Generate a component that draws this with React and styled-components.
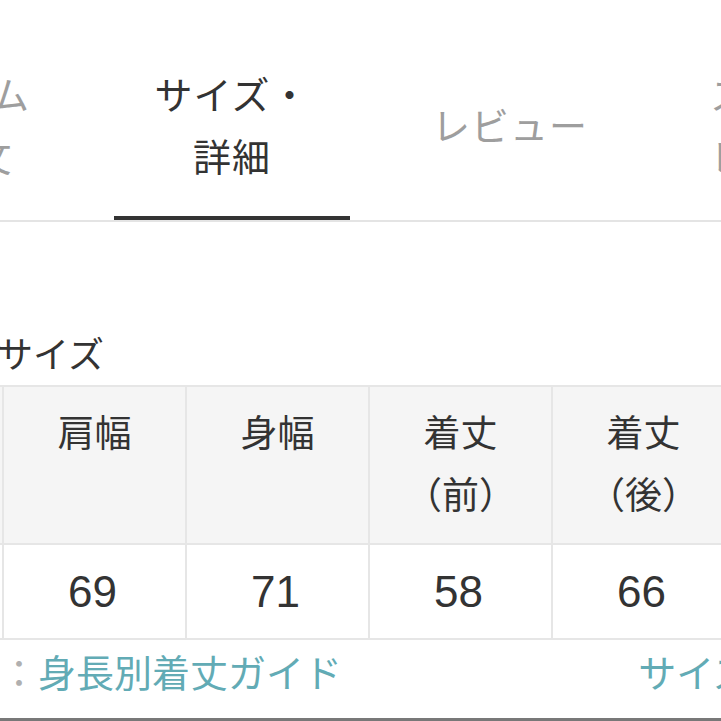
import React from 'react'
import styled, { createGlobalStyle } from 'styled-components'

const GlobalStyle = createGlobalStyle`
    html, body {
        margin: 0;
        padding: 0;
        background: #fff;
    }
    body {
        font-family: "Noto Sans CJK JP", "Noto Sans", sans-serif;
        color: #333;
    }
`

const Page = styled.div`
    width: 721px;
    height: 721px;
    overflow: hidden;
    box-sizing: border-box;
    border-bottom: 3px solid #787878;
    background: #fff;
    display: flex;
    flex-direction: column;
`

const TabBar = styled.nav`
    display: flex;
    flex-shrink: 0;
    margin-left: -185px;
    padding-top: 27px;
    border-bottom: 2px solid #e4e4e4;
    width: max-content;
    min-width: 906px;
`

const Tab = styled.div`
    position: relative;
    width: 278px;
    height: 193px;
    flex-shrink: 0;
    display: flex;
    align-items: center;
    justify-content: center;
    text-align: center;
    font-size: 38px;
    line-height: 62px;
    letter-spacing: 1px;
    color: ${p => (p.$active ? '#333' : '#9e9e9e')};
    white-space: pre-line;

    &::after {
        content: '';
        display: ${p => (p.$active ? 'block' : 'none')};
        position: absolute;
        left: 21px;
        right: 21px;
        bottom: 0;
        height: 4px;
        background: #333;
    }
`

const Section = styled.section`
    padding-top: 105px;
`

const Title = styled.h2`
    margin: 0 0 0 -3px;
    font-size: 36px;
    font-weight: 400;
    line-height: 50px;
    height: 58px;
    color: #333;
`

const Table = styled.table`
    margin-left: -181px;
    border-collapse: collapse;
    table-layout: fixed;
    width: ${183 * 6}px;
`

const HeadCell = styled.th`
    width: 183px;
    height: 158px;
    box-sizing: border-box;
    padding: 13px 0 0;
    vertical-align: top;
    background: #f5f5f5;
    border: 2px solid #e6e6e6;
    font-size: 37px;
    font-weight: 400;
    line-height: 62px;
    color: #333;
    white-space: pre-line;
`

const BodyCell = styled.td`
    height: 93px;
    padding: 0 4px 0 0;
    text-align: center;
    vertical-align: middle;
    background: #fff;
    border: 2px solid #e6e6e6;
    font-family: "Liberation Sans", Arial, sans-serif;
    font-size: 44px;
    color: #333;
`

const LinkRow = styled.div`
    display: flex;
    align-items: center;
    padding-top: 4px;
    height: 54px;
`

const GuideLink = styled.a`
    flex-shrink: 0;
    font-size: 38px;
    line-height: 50px;
    color: #62abb5;
    text-decoration: none;
    white-space: nowrap;
    margin-left: ${p => (p.$right ? 'auto' : '0')};
    margin-right: ${p => (p.$right ? '-182px' : '0')};
`

const Colon = styled.span`
    color: #b0b0b0;
`

const tabs = [
    { label: 'アイテム\n紹介文' },
    { label: 'サイズ・\n詳細', active: true },
    { label: 'レビュー' },
    { label: 'スタッフ\nレビュー' },
]

const heads = ['サイズ', '肩幅', '身幅', '着丈\n（前）', '着丈\n（後）', '袖丈']
const values = ['FREE', '69', '71', '58', '66', '52']

export default function App() {
    return (
        <Page>
            <GlobalStyle />
            <TabBar>
                {tabs.map(t => (
                    <Tab key={t.label} $active={t.active}>{t.label}</Tab>
                ))}
            </TabBar>
            <Section>
                <Title>サイズ</Title>
                <Table>
                    <thead>
                        <tr>
                            {heads.map(h => <HeadCell key={h}>{h}</HeadCell>)}
                        </tr>
                    </thead>
                    <tbody>
                        <tr>
                            {values.map((v, i) => <BodyCell key={i}>{v}</BodyCell>)}
                        </tr>
                    </tbody>
                </Table>
                <LinkRow>
                    <GuideLink href="#"><Colon>：</Colon>身長別着丈ガイド</GuideLink>
                    <GuideLink href="#" $right>サイズの測り方</GuideLink>
                </LinkRow>
            </Section>
        </Page>
    )
}
